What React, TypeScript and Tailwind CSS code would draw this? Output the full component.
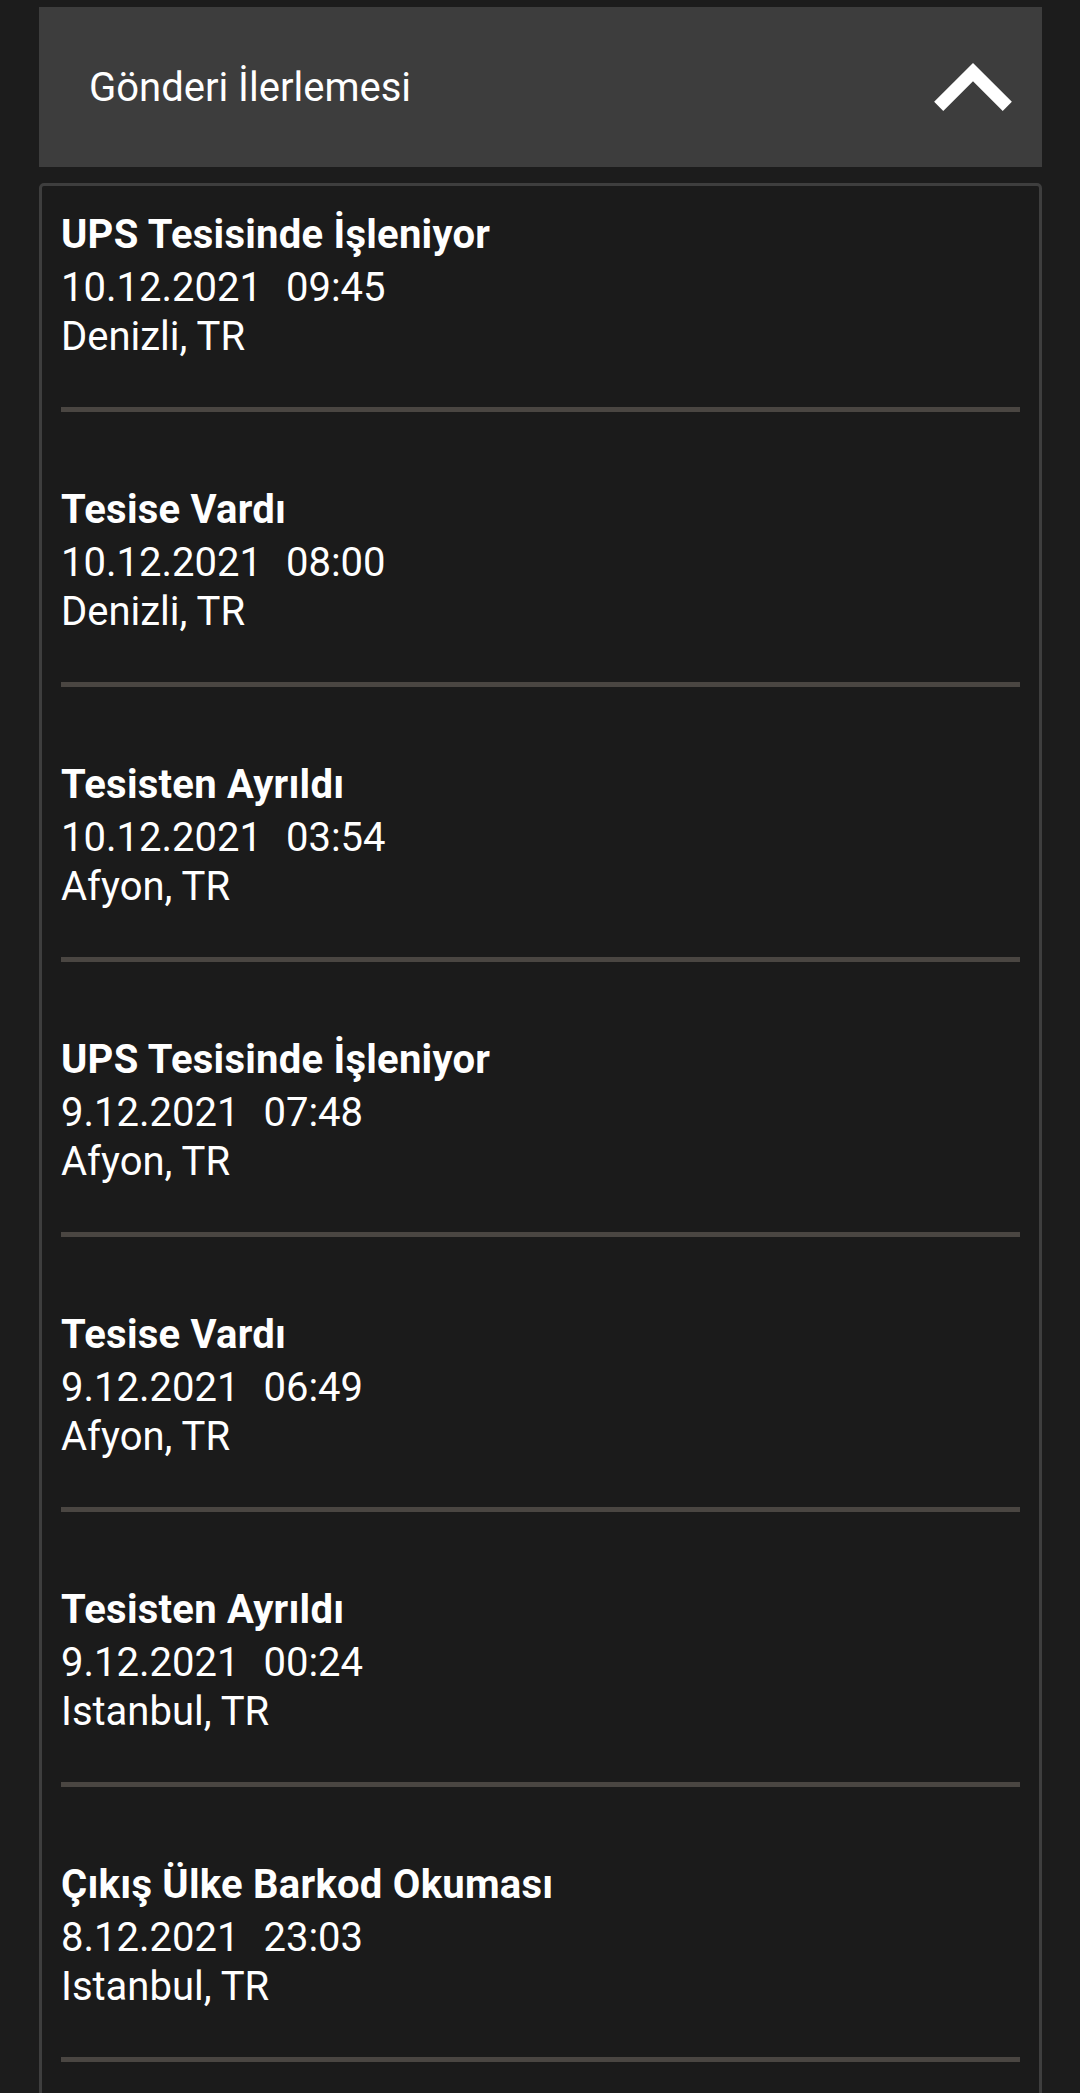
import React from "react";

type Scan = {
  status: string;
  date: string;
  time: string;
  place: string;
};

const scans: Scan[] = [
  { status: "UPS Tesisinde İşleniyor", date: "10.12.2021", time: "09:45", place: "Denizli, TR" },
  { status: "Tesise Vardı", date: "10.12.2021", time: "08:00", place: "Denizli, TR" },
  { status: "Tesisten Ayrıldı", date: "10.12.2021", time: "03:54", place: "Afyon, TR" },
  { status: "UPS Tesisinde İşleniyor", date: "9.12.2021", time: "07:48", place: "Afyon, TR" },
  { status: "Tesise Vardı", date: "9.12.2021", time: "06:49", place: "Afyon, TR" },
  { status: "Tesisten Ayrıldı", date: "9.12.2021", time: "00:24", place: "Istanbul, TR" },
  { status: "Çıkış Ülke Barkod Okuması", date: "8.12.2021", time: "23:03", place: "Istanbul, TR" },
];

function ChevronUp() {
  return (
    <svg width="78" height="48" viewBox="6 8 12 7.41" className="shrink-0" fill="#ffffff">
      <path d="M12 8l-6 6 1.41 1.41L12 10.83l4.59 4.58L18 14z" />
    </svg>
  );
}

function ScanRow({ scan }: { scan: Scan }) {
  return (
    <div className="pt-[23px]">
      <div className="text-[40px] leading-[52px] font-bold tracking-[0.25px] text-white">{scan.status}</div>
      <div className="mt-[2px] text-[40px] leading-[50px] text-white">
        {scan.date}
        <span className="ml-[24px]">{scan.time}</span>
      </div>
      <div className="-mt-[1px] text-[40px] leading-[50px] text-white">{scan.place}</div>
      <div className="mt-[45px] mb-[49px] h-[5px] bg-[#4a4642]" />
    </div>
  );
}

export default function App() {
  return (
    <div
      className="h-[2093px] overflow-hidden bg-[#1c1c1c] pl-[39px] pr-[38px] pt-[7px]"
      style={{ fontFamily: "Roboto, 'Noto Sans', sans-serif" }}
    >
      {/* Section header */}
      <div className="h-[160px] bg-[#3d3d3d] flex items-center justify-between pl-[50px] pr-[30px]">
        <span className="pt-[2px] text-[40px] text-white">Gönderi İlerlemesi</span>
        <ChevronUp />
      </div>

      {/* Tracking history */}
      <div className="mt-[16px] rounded-[5px] border-[3px] border-[#3e3e3e] bg-[#1b1b1b] px-[19px]">
        {scans.map((s, i) => (
          <ScanRow key={i} scan={s} />
        ))}
      </div>
    </div>
  );
}
